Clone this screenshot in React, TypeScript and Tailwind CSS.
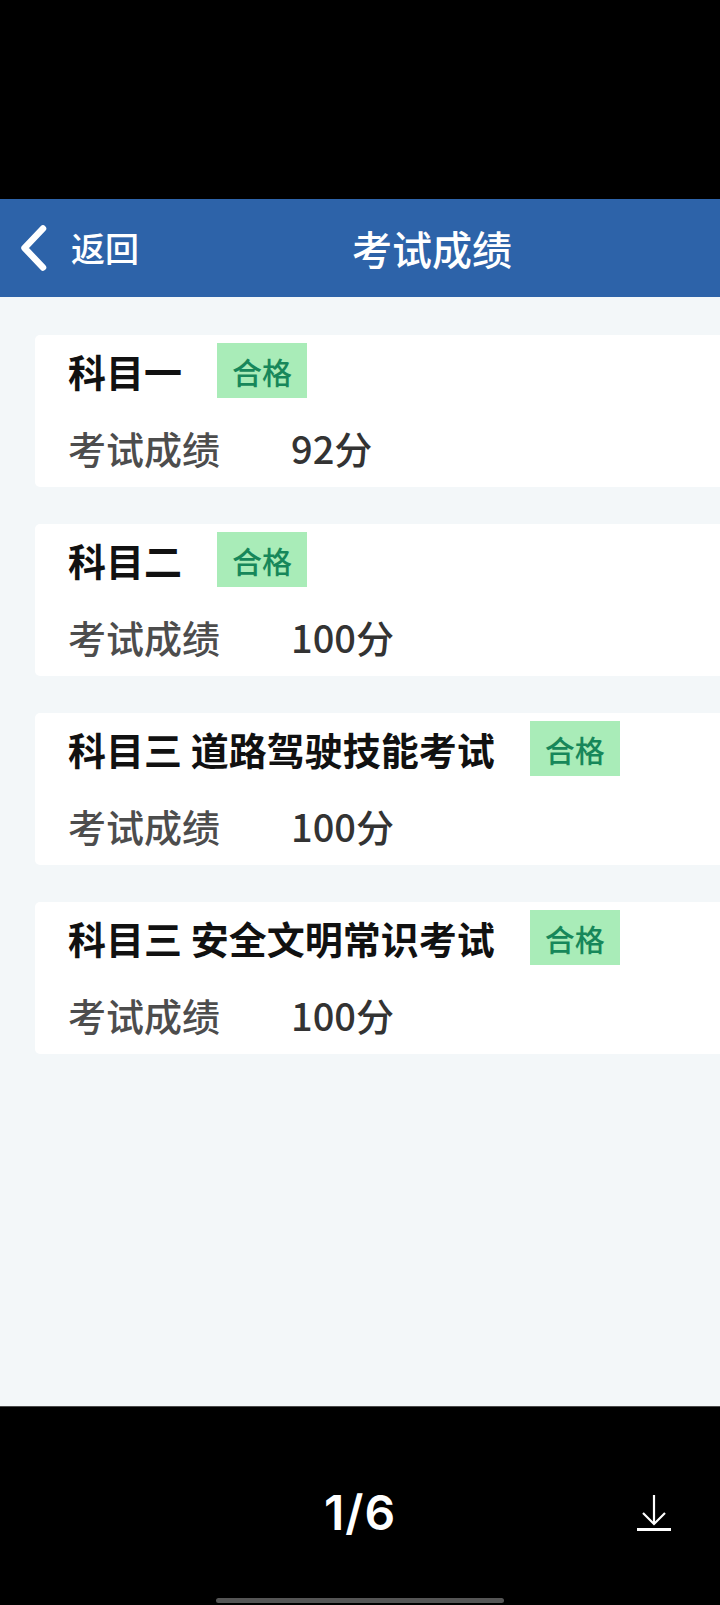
import React from "react";

const subjects = [
  { name: "科目一", score: "92" },
  { name: "科目二", score: "100" },
  { name: "科目三 道路驾驶技能考试", score: "100" },
  { name: "科目三 安全文明常识考试", score: "100" },
];

const ScoreCard = ({ name, score }: { name: string; score: string }) => {
  return (
    <div className="bg-white rounded-l-[5px] pl-[33px] pt-[8px] pb-[14px]">
      <div className="flex items-center h-[55px]">
        <span className="text-[38px] leading-none font-bold text-[#111] whitespace-pre">{name}</span>
        <span className="ml-[35px] w-[90px] h-[55px] flex items-center justify-center bg-[#a9ecb8] text-[#17875a] text-[30px] leading-none font-medium">
          合格
        </span>
      </div>
      <div className="flex items-center mt-[25px] h-[50px] text-[38px] leading-none font-medium">
        <span className="w-[223px] text-[#4d4d4d]">考试成绩</span>
        <span className="text-[#333]">{score}分</span>
      </div>
    </div>
  );
};

const App = () => {
  return (
    <div className="w-[720px] h-[1605px] flex flex-col bg-black font-['Noto_Sans_CJK_SC','Noto_Sans',sans-serif]">
      <div className="h-[199px] shrink-0 bg-black" />
      <div className="h-[98px] shrink-0 bg-[#2d63a9] flex items-center text-white">
        <div className="w-[352px] shrink-0 flex items-center">
          <svg className="ml-[19px]" width="28" height="46" viewBox="0 0 28 46" fill="none">
            <path d="M24 3.5 L5.5 23 L24 42.5" stroke="white" strokeWidth="6.5" strokeLinecap="round" strokeLinejoin="round" />
          </svg>
          <span className="ml-[24px] text-[34px] leading-none font-medium">返回</span>
        </div>
        <span className="text-[40px] leading-none font-medium">考试成绩</span>
      </div>
      <div className="flex-1 bg-[#f3f7f9] pt-[38px] pl-[35px] flex flex-col gap-[37px]">
        {subjects.map((s) => (
          <ScoreCard key={s.name} name={s.name} score={s.score} />
        ))}
      </div>
      <div className="h-[199px] shrink-0 bg-black border-t border-[#4a4a4a] flex flex-col">
        <div className="grid grid-cols-[1fr_auto_1fr] items-center mt-[82px] h-[40px]">
          <div />
          <span className="text-white text-[48px] leading-none font-semibold tracking-[1px] font-['Inter',sans-serif]">1/6</span>
          <div className="flex justify-end pr-[48px]">
            <svg width="36" height="38" viewBox="0 0 36 38" fill="none" stroke="white" strokeWidth="2.2">
              <path d="M18 1 V30" />
              <path d="M7 19 L18 30 L29 19" strokeLinejoin="miter" />
              <path d="M1 35.5 H35" strokeWidth="3" />
            </svg>
          </div>
        </div>
        <div className="flex-1" />
        <div className="mx-auto mb-[2px] w-[288px] h-[5px] rounded-full bg-[#555]" />
      </div>
    </div>
  );
};

export default App;
